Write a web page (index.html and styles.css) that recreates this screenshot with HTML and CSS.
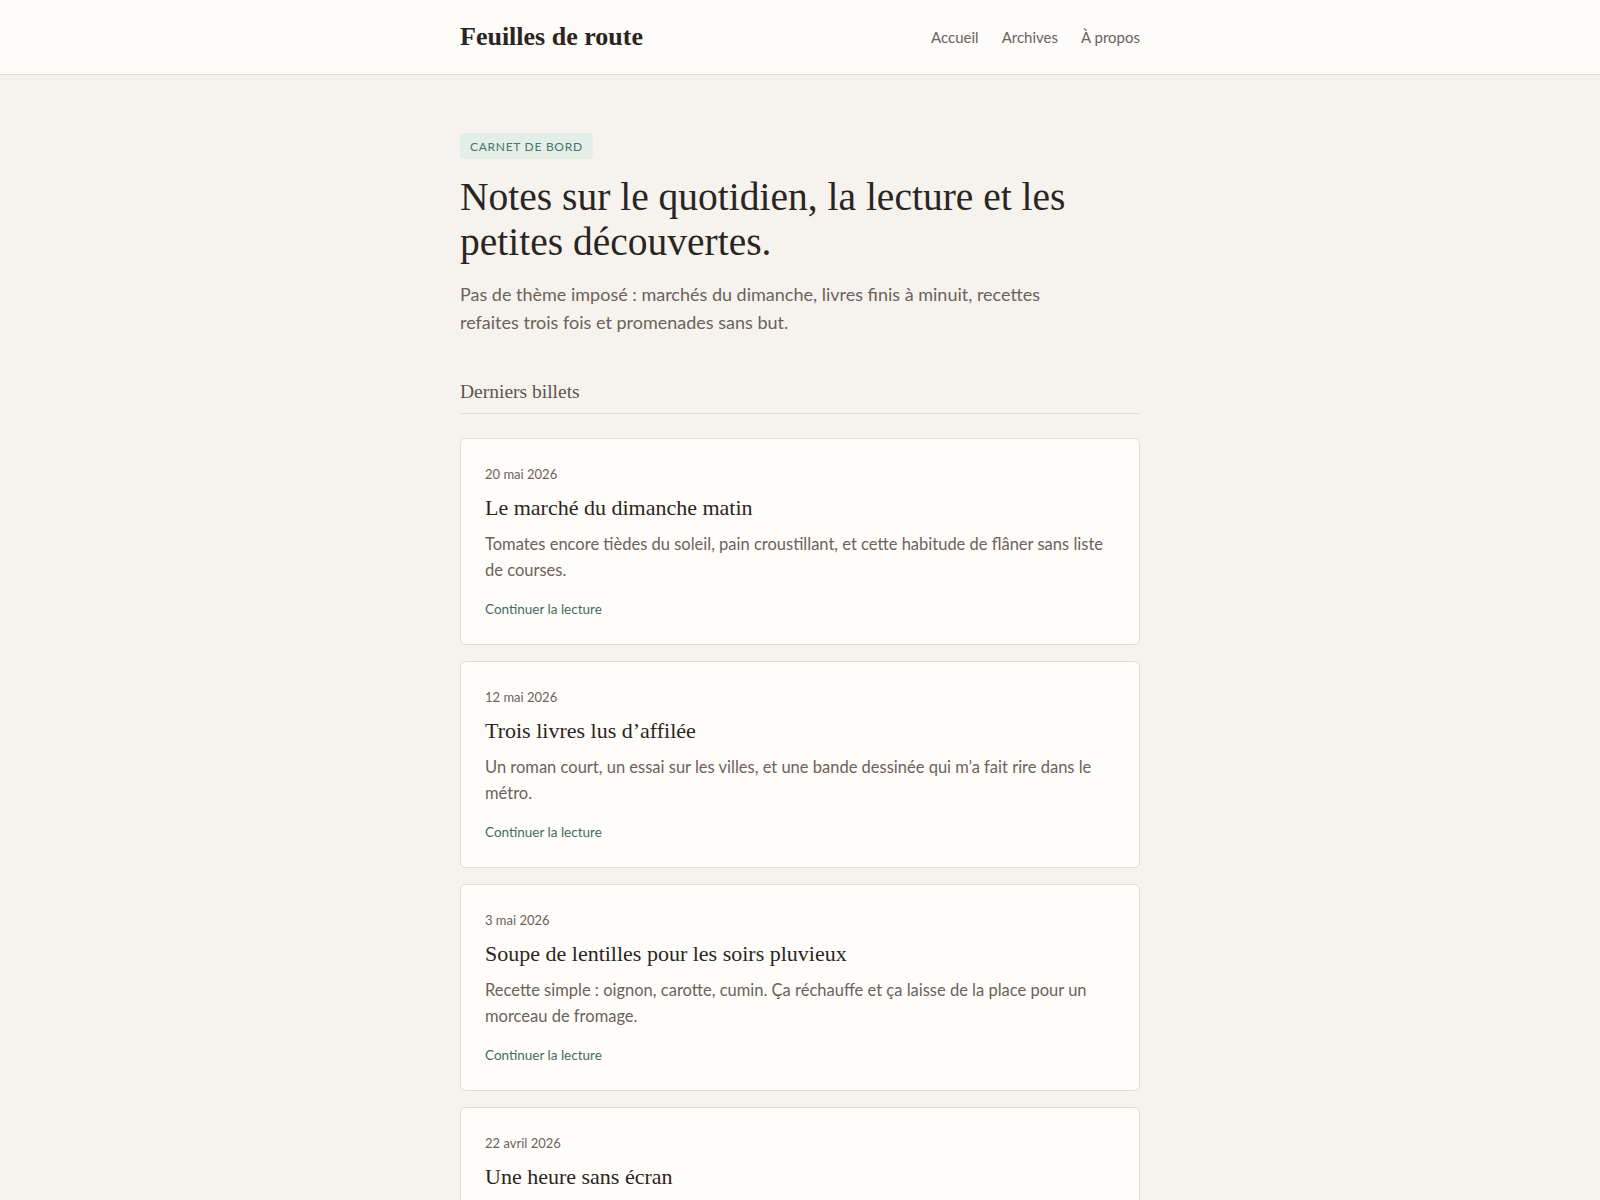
FILE: index.html
```html
<!DOCTYPE html>
<html lang="fr">

<head>
  <meta charset="UTF-8">
  <meta name="viewport" content="width=device-width, initial-scale=1.0">
  <title>Feuilles de route</title>
  <link rel="stylesheet" href="styles.css">
</head>

<body>
  <header class="site-header">
    <div class="wrap header-inner">
      <a href="#" class="site-title">Feuilles de route</a>
      <nav class="site-nav">
        <a href="#">Accueil</a>
        <a href="#">Archives</a>
        <a href="#">À propos</a>
      </nav>
    </div>
  </header>

  <main class="wrap">
    <section class="intro">
      <span class="badge">Carnet de bord</span>
      <h1>Notes sur le quotidien, la lecture et les petites découvertes.</h1>
      <p class="lead">Pas de thème imposé : marchés du dimanche, livres finis à minuit, recettes refaites trois fois et promenades sans but.</p>
    </section>

    <h2 class="section-title">Derniers billets</h2>

    <div class="posts">
      <article class="post">
        <time>20 mai 2026</time>
        <h3>Le marché du dimanche matin</h3>
        <p>Tomates encore tièdes du soleil, pain croustillant, et cette habitude de flâner sans liste de courses.</p>
        <a href="#" class="more">Continuer la lecture</a>
      </article>
      <article class="post">
        <time>12 mai 2026</time>
        <h3>Trois livres lus d’affilée</h3>
        <p>Un roman court, un essai sur les villes, et une bande dessinée qui m’a fait rire dans le métro.</p>
        <a href="#" class="more">Continuer la lecture</a>
      </article>
      <article class="post">
        <time>3 mai 2026</time>
        <h3>Soupe de lentilles pour les soirs pluvieux</h3>
        <p>Recette simple : oignon, carotte, cumin. Ça réchauffe et ça laisse de la place pour un morceau de fromage.</p>
        <a href="#" class="more">Continuer la lecture</a>
      </article>
      <article class="post">
        <time>22 avril 2026</time>
        <h3>Une heure sans écran</h3>
        <p>Un carnet, un crayon, une fenêtre ouverte : ce qu’on remarque quand on cesse de faire défiler.</p>
        <a href="#" class="more">Continuer la lecture</a>
      </article>
    </div>
  </main>
</body>

</html>
```

FILE: styles.css
```css
body,
h1,
h2,
h3,
p {
  margin: 0;
  padding: 0;
}

body {
  font-family: Lato, "Noto Sans", sans-serif;
  color: #2b2521;
  background-color: #f6f3ef;
}

a {
  text-decoration: none;
}

.wrap {
  max-width: 680px;
  margin: 0 auto;
}

.site-header {
  background-color: #fdfcfa;
  border-bottom: 1px solid #e1dcd5;
}

.header-inner {
  display: flex;
  align-items: center;
  justify-content: space-between;
  height: 74px;
}

.site-title {
  font-family: "Liberation Serif", "DejaVu Serif", serif;
  font-weight: bold;
  font-size: 26px;
  color: #2b2521;
  margin-top: -1px;
}

.site-nav {
  display: flex;
  gap: 23px;
}

.site-nav a {
  font-size: 15px;
  color: #6b625a;
}

main {
  padding: 58px 0 60px;
}

.badge {
  display: inline-block;
  background-color: #e4eee9;
  color: #4a7568;
  font-size: 12px;
  letter-spacing: 0.06em;
  text-transform: uppercase;
  padding: 6px 10px 5px;
  border-radius: 4px;
}

h1 {
  font-family: "Liberation Serif", "DejaVu Serif", serif;
  font-weight: normal;
  font-size: 39.5px;
  line-height: 45px;
  margin-top: 16px;
  max-width: 620px;
  color: #2b2521;
}

.lead {
  font-size: 18px;
  line-height: 28px;
  color: #6b625a;
  margin-top: 15px;
  max-width: 600px;
}

.section-title {
  font-family: "Liberation Serif", "DejaVu Serif", serif;
  font-weight: normal;
  font-size: 19.5px;
  color: #5e554d;
  margin-top: 45px;
  padding-bottom: 10px;
  border-bottom: 1px solid #e1dcd5;
}

.posts {
  display: flex;
  flex-direction: column;
  gap: 16px;
  margin-top: 24px;
}

.post {
  background-color: #fffdfa;
  border: 1px solid #e1dcd5;
  border-radius: 6px;
  padding: 27px 24px 27px;
}

.post time {
  display: block;
  font-size: 13px;
  color: #6b625a;
}

.post h3 {
  font-family: "Liberation Serif", "DejaVu Serif", serif;
  font-weight: normal;
  font-size: 22px;
  margin-top: 13px;
  color: #2b2521;
}

.post p {
  font-size: 16.5px;
  line-height: 25.5px;
  color: #6b625a;
  margin-top: 11px;
}

.more {
  display: inline-block;
  margin-top: 18px;
  font-size: 13.5px;
  color: #3f6c5f;
}
```
